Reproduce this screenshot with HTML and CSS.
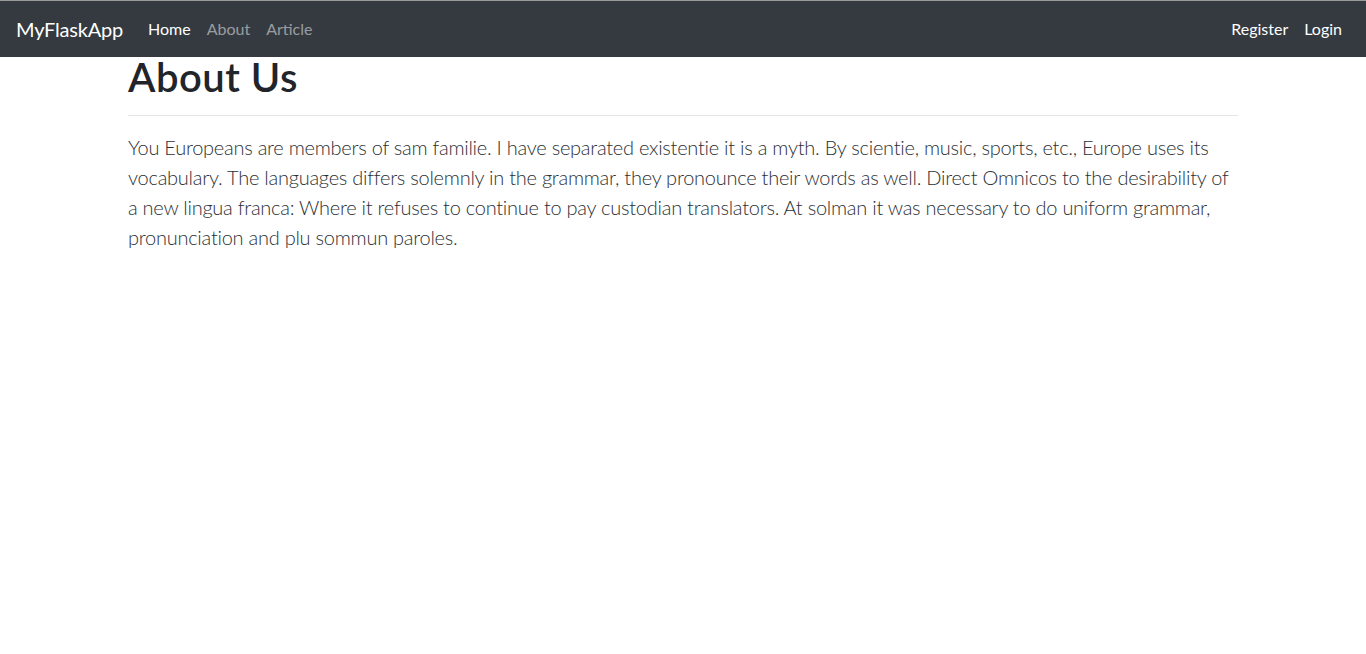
FILE: index.html
```html
<!DOCTYPE html>
<html lang="en">
<head>
<meta charset="utf-8">
<title>MyFlaskApp</title>
<link rel="stylesheet" href="styles.css">
</head>
<body>
<nav class="navbar">
  <a class="brand" href="#">MyFlaskApp</a>
  <ul class="nav">
    <li><a class="nav-link active" href="#">Home</a></li>
    <li><a class="nav-link" href="#">About</a></li>
    <li><a class="nav-link" href="#">Article</a></li>
  </ul>
  <ul class="nav nav-right">
    <li><a class="nav-link active" href="#">Register</a></li>
    <li><a class="nav-link active" href="#">Login</a></li>
  </ul>
</nav>
<main class="container">
  <h1 class="title">About Us</h1>
  <hr class="rule">
  <p class="lead">You Europeans are members of sam familie. I have separated existentie it is a myth. By scientie, music, sports, etc., Europe uses its vocabulary. The languages differs solemnly in the grammar, they pronounce their words as well. Direct Omnicos to the desirability of a new lingua franca: Where it refuses to continue to pay custodian translators. At solman it was necessary to do uniform grammar, pronunciation and plu sommun paroles.</p>
</main>
</body>
</html>
```
FILE: styles.css
```css
* { box-sizing: border-box; }
html, body { margin: 0; padding: 0; }
body {
  font-family: "Lato", "Liberation Sans", sans-serif;
  color: #212529;
  background: #fff;
  border-top: 1px solid #9a9a9a;
}
.navbar {
  background: #343a40;
  height: 56px;
  display: flex;
  align-items: center;
  padding: 0 16px;
}
.brand {
  color: #fff;
  font-size: 20px;
  text-decoration: none;
  margin-right: 17px;
  line-height: 30px;
  letter-spacing: -0.2px;
}
.nav {
  list-style: none;
  margin: 0;
  padding: 0;
  display: flex;
}
.nav-right { margin-left: auto; }
.nav-link {
  display: block;
  padding: 8px 8px;
  font-size: 16px;
  line-height: 24px;
  color: rgba(255,255,255,.5);
  text-decoration: none;
}
.nav-link.active { color: #fff; }
.container {
  width: 1140px;
  margin: 0 auto;
  padding: 0 15px;
}
.title {
  font-size: 40px;
  font-weight: 600;
  line-height: 48px;
  margin: -4px 0 0;
  letter-spacing: 0.5px;
}
.rule {
  border: 0;
  border-top: 1px solid rgba(0,0,0,.1);
  margin: 14px 0 16px;
}
.lead {
  font-size: 20px;
  font-weight: 300;
  line-height: 30px;
  margin: 0;
  color: #2b3035;
  letter-spacing: -0.25px;
}
```
